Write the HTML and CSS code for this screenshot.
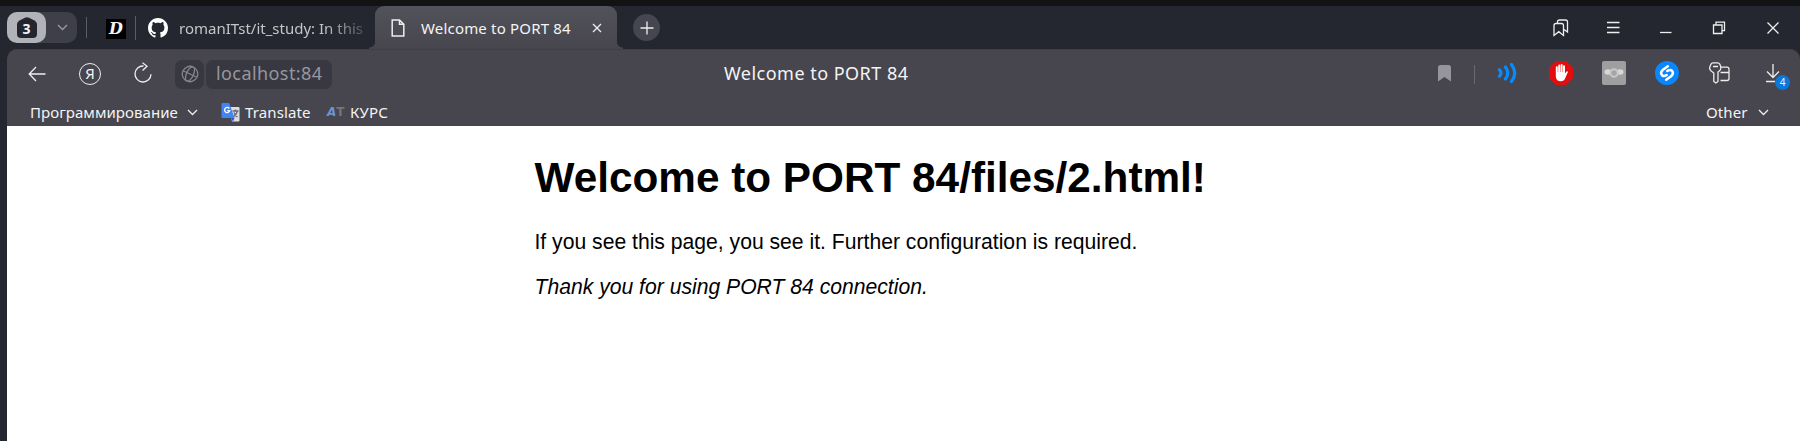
FILE: index.html
```html
<!DOCTYPE html>
<html lang="en">
<head>
<meta charset="utf-8">
<title>Welcome to PORT 84</title>
<link rel="stylesheet" href="styles.css">
</head>
<body>
<header class="tabs">
  <div class="group"><div class="count"><svg width="20" height="21" viewBox="0 0 20 21"><path d="M8 .7Q10-.3 12 .7L17.5 3.5Q20 5 20 7v10q0 4-4 4H4q-4 0-4-4V7Q0 5 2.5 3.5Z" fill="#24262f"/></svg><b>3</b></div><svg class="chev" width="11" height="7" viewBox="0 0 11 7"><path d="M1 1l4.500 4.500L10 1"/></svg></div>
  <i class="sep sep-a"></i>
  <span class="dicon">D</span>
  <i class="sep sep-b"></i>
  <svg class="github" width="20" height="20" viewBox="0 0 16 16"><path fill="#fff" d="M8 0C3.580 0 0 3.580 0 8c0 3.540 2.290 6.530 5.470 7.590.4.070.55-.17.55-.38 0-.19-.01-.82-.01-1.490-2.010.37-2.530-.49-2.690-.94-.09-.23-.48-.94-.82-1.130-.28-.15-.68-.52-.01-.53.63-.01 1.080.58 1.230.82.72 1.210 1.870.87 2.330.66.07-.52.28-.87.51-1.070-1.780-.2-3.640-.89-3.640-3.950 0-.87.31-1.590.82-2.150-.08-.2-.36-1.020.08-2.120 0 0 .67-.21 2.200.82.64-.18 1.320-.27 2-.27s1.360.09 2 .27c1.530-1.040 2.200-.82 2.200-.82.44 1.100.16 1.920.08 2.120.51.56.82 1.270.82 2.150 0 3.070-1.870 3.750-3.650 3.950.29.25.54.73.54 1.480 0 1.070-.01 1.930-.01 2.200 0 .21.15.46.55.38A8 8 0 0 0 16 8c0-4.420-3.580-8-8-8Z"/></svg>
  <span class="bgtitle">romanITst/it_study: In this</span>
  <div class="active">
    <svg class="doc" width="14" height="18" viewBox="0 0 14 18"><path d="M1.200 1h7.300L12.800 5.300v11.700H1.200ZM8.500 1v4.300h4.300" stroke-width="1.500"/></svg>
    <span class="acttitle">Welcome to PORT 84</span>
    <svg width="10" height="10" viewBox="0 0 10 10"><path d="M1 1l8 8M9 1L1 9"/></svg>
  </div>
  <div class="plus"><svg width="14" height="14" viewBox="0 0 14 14"><path d="M7 .5v13M.5 7h13"/></svg></div>
  <div class="window">
    <svg width="16" height="18" viewBox="0 0 16 18"><path d="M1 16.500V6.500q0-2 2-2h5.500q2 0 2 2v10L5.800 12.700ZM4.500 4.500V3q0-2 2-2h6q2 0 2 2V13L11 10.500"/></svg>
    <svg width="13" height="13" viewBox="0 0 13 13"><path d="M0 1.500h12.500M0 6.500h12.500M0 11.500h12.500"/></svg>
    <svg width="12" height="12" viewBox="0 0 12 12"><path d="M0 10.500h11.500"/></svg>
    <svg width="14" height="14" viewBox="0 0 14 14"><path d="M1.500 4h8.500v8.500H1.500ZM4 4V1.200h8.500v8.500H10"/></svg>
    <svg width="14" height="14" viewBox="0 0 14 14"><path d="M1.500 1.500l11 11M12.500 1.500l-11 11"/></svg>
  </div>
</header>
<div class="panel">
  <nav class="toolbar">
    <svg class="back" width="18" height="16" viewBox="0 0 18 16"><path d="M17.500 8H1.500M8 1L1.200 8L8 15"/></svg>
    <div class="ya">Я</div>
    <svg class="reload" width="20" height="22" viewBox="0 0 20 22"><path d="M10.500 4A8 8 0 1 0 18 12.200M9.500 .8L14 4.200L9.500 8.500"/></svg>
    <div class="globe"><svg width="18" height="18" viewBox="0 0 18 18"><g transform="rotate(25 9 9)"><circle cx="9" cy="9" r="7.700"/><ellipse cx="9" cy="9" rx="3.500" ry="7.700"/><path d="M1.300 9h15.400"/></g></svg></div>
    <div class="url"><span>localhost:84</span></div>
    <div class="pagetitle"><span>Welcome to PORT 84</span></div>
    <svg class="mark" width="13" height="17" viewBox="0 0 13 17"><path d="M0 16.500V2.500Q0 0 2.500 0h8Q13 0 13 2.500v14L6.500 12Z" fill="#96959b"/></svg>
    <i class="sep sep-c"></i>
    <div class="extensions">
      <svg width="24" height="24" viewBox="0 0 24 24"><g fill="none" stroke="#058cff" stroke-width="3.200" stroke-linecap="round"><path d="M3.500 8.700q2.800 3.300 0 6.600M9.500 6q4.500 6 0 12M15.500 3.500q6.500 8.500 0 17"/></g></svg>
      <svg width="24" height="24" viewBox="0 0 24 24"><path d="M7 0h10l7 7v10l-7 7H7L0 17V7Z" fill="#e40d0d"/><path d="M6.800 9V6.500q0-1.200 1-1.200t1 1.200V11h.4V4.700q0-1.200 1-1.200t1 1.200V11h.4V4.300q0-1.200 1-1.200t1 1.200V11h.4V5.500q0-1.200 1-1.200t1 1.200v7l1.200-1.800q1-1 1.800 0l-2.700 6.200q-1.200 3.300-4.500 3.300-5 0-5-5Z" fill="#fff"/></svg>
      <svg width="24" height="24" viewBox="0 0 24 24"><rect width="24" height="24" rx="2" fill="#9f9f9f"/><ellipse cx="6" cy="11" rx="3.500" ry="2.700" fill="#d8d8d8"/><ellipse cx="18" cy="11" rx="3.500" ry="2.700" fill="#d8d8d8"/><circle cx="12" cy="12" r="3.700" fill="#a5a5a5" stroke="#c8c8c8" stroke-width="2"/></svg>
      <svg width="24" height="24" viewBox="0 0 24 24"><circle cx="12" cy="12" r="12" fill="#0a87ff"/><g fill="none" stroke="#fff" stroke-width="2.500" stroke-linecap="round"><path d="M12.800 5.300L8 8.800Q4.800 11.500 7 14.200Q9 16 11.700 14M11.200 18.700L16 15.200Q19.200 12.500 17 9.800Q15 8 12.300 10"/></g></svg>
      <svg class="key" width="24" height="24" viewBox="0 0 24 24"><path d="M10 11Q13.500 9 12.700 5.500L11.700 3Q11 1.800 9.500 1.800H5Q3.500 1.800 2.800 3.500L1.800 6Q1 9 4.500 11L5.800 12v8.500l2 1.500 2.200-1.500ZM5 5.500h5M13 6.200h6q2 0 2 2v9.300q0 2-2 2h-6.500M12.500 11.500H21"/></svg>
      <div class="download"><svg width="16" height="20" viewBox="0 0 16 20"><path d="M8 0v13.500M2 7.500l6 6 6-6M1 17.500h9"/></svg><span>4</span></div>
    </div>
  </nav>
  <nav class="bookmarks">
    <span class="prog">Программирование</span>
    <svg class="c1" width="11" height="7" viewBox="0 0 11 7"><path d="M1 1l4.500 4.500L10 1"/></svg>
    <svg class="gt" width="19" height="19" viewBox="0 0 19 19"><path d="M8 4h9.500q1 0 1 1v12.500q0 1-1 1H11Z" fill="#ddd"/><path d="M11.500 8h6M14.500 6.500V8M16.500 8q-1 4-4.500 6M13 9.500q1 3 3.500 4.500" stroke="#667"/><path d="M1.500 0h6.700L13.500 15H1.500Q.5 15 .5 14V1Q.5 0 1.500 0Z" fill="#4285f4"/><path d="M13.500 15H10l2 3.500Z" fill="#2857c4"/><path d="M8.300 5.500A2.600 2.600 0 1 0 8.700 7.700H6.200" stroke="#fff"/></svg>
    <span class="translate">Translate</span>
    <span class="at"><b>A</b>T</span>
    <span class="course">КУРС</span>
    <span class="other">Other</span>
    <svg class="c2" width="11" height="7" viewBox="0 0 11 7"><path d="M1 1l4.500 4.500L10 1"/></svg>
  </nav>
  <main class="page">
    <article class="content">
      <h1>Welcome to PORT 84/files/2.html!</h1>
      <p>If you see this page, you see it. Further configuration is required.</p>
      <p><em>Thank you for using PORT 84 connection.</em></p>
    </article>
  </main>
</div>
</body>
</html>
```
FILE: styles.css
```css
* { box-sizing: border-box; }
body { margin: 0; height: 441px; display: flex; flex-direction: column; overflow: hidden; background: #242730; border-top: 6px solid #131313; font: 15px "Noto Sans", sans-serif; color: #f4f4f4; }
svg { display: block; flex: none; fill: none; stroke: #eee; stroke-width: 1.3; }
svg [fill]:not([stroke]):not(g) { stroke: none; }
span { white-space: nowrap; }
.sep { flex: none; width: 1px; background: #5b5c65; }
.tabs { height: 43px; flex: none; display: flex; align-items: center; padding-left: 7px; }
.group { width: 70px; height: 31px; border-radius: 10px; background: #3e3f49; display: flex; align-items: center; }
.count { width: 39px; height: 31px; border-radius: 10px; background: #b2b3b8; display: grid; place-items: center; }
.count > * { grid-area: 1 / 1; }
.count b { font-size: 14px; line-height: 20px; padding-top: 2px; }
.chev { margin-left: 11px; stroke: #999aa2; }
.sep-a { height: 21px; margin-left: 9px; }
.sep-b { height: 24px; margin-left: 9px; }
.dicon { width: 20px; height: 20px; margin: 3px 0 0 19px; background: #000; text-align: center; font: italic bold 16px/20px "DejaVu Serif", serif; }
.github { margin-left: 12px; stroke: none; }
.bgtitle { width: 185px; margin-left: 11px; overflow: hidden; color: #c5c5c9; mask-image: linear-gradient(90deg, #000 78%, rgba(0,0,0,.25)); }
.active { position: relative; width: 242px; height: 43px; margin-left: 11px; padding-left: 16px; display: flex; align-items: center; background: linear-gradient(#52525a, #47464f); border-radius: 9px 9px 0 0; }
.active::before, .active::after { content: ""; position: absolute; bottom: 0; width: 6px; height: 8px; }
.active::before { left: -6px; background: radial-gradient(circle at 0 0, transparent 6px, #47464f 7px); }
.active::after { right: -6px; background: radial-gradient(circle at 100% 0, transparent 6px, #47464f 7px); }
.acttitle { width: 171px; margin-left: 16px; letter-spacing: .18px; }
.plus { width: 27px; height: 27px; margin-left: 16px; border-radius: 50%; background: #454650; display: grid; place-items: center; }
.window { margin-left: auto; padding-right: 20px; display: flex; align-items: center; gap: 40px; }
.window svg:first-child { margin-right: -2px; }
.panel { position: relative; flex: 1; margin-left: 7px; background: #47464f; border-radius: 10px 10px 0 0; box-shadow: inset 0 1px #403f48; display: flex; flex-direction: column; }
.toolbar { height: 50px; flex: none; display: flex; align-items: center; padding-left: 21px; }
.ya { width: 22px; height: 22px; margin-left: 33px; border: 1.3px solid #eee; border-radius: 50%; font: 15px/19px "Noto Sans", sans-serif; text-align: center; }
.reload { margin: -2px 0 0 32px; }
.globe { width: 29px; height: 29px; margin-left: 22px; background: #373841; border-radius: 7px; display: grid; place-items: center; }
.globe svg { stroke: #85858d; }
.url { width: 126px; height: 29px; margin-left: 2px; padding-left: 10px; background: #373841; border-radius: 7px; font-size: 18px; line-height: 27px; letter-spacing: .42px; color: #97969e; }
.pagetitle { width: 186px; margin-left: 392px; font-size: 18px; line-height: 24px; padding-bottom: 2px; letter-spacing: .48px; }
.mark { margin-left: 528px; margin-top: -2px; }
.sep-c { height: 19px; margin-left: 23px; background: #696871; }
.extensions { display: flex; align-items: center; gap: 29px; margin-left: 21px; margin-top: -2px; }
.download { position: relative; width: 26px; height: 24px; padding: 3px 0 0 4px; }
.download span { position: absolute; left: 14px; top: 14px; width: 15px; height: 15px; border-radius: 50%; background: #0879dc; font-size: 10px; line-height: 15px; text-align: center; }
.bookmarks { height: 27px; flex: none; padding: 0 31px 1px 23px; display: flex; align-items: center; }
.prog { width: 148px; letter-spacing: .05px; }
.c1 { margin-left: 9px; }
.gt { margin-left: 23px; }
.translate { width: 66px; margin-left: 5px; letter-spacing: .12px; }
.at { margin-left: 16px; width: 19px; color: #77757a; font: bold 12px/12px "DejaVu Sans", sans-serif; }
.at b { color: #6d93cf; font-style: italic; }
.course { margin-left: 4px; letter-spacing: .15px; }
.other { margin-left: auto; width: 43px; letter-spacing: .1px; }
.c2 { margin-left: 9px; }
.page { flex: 1; background: #fff; color: #000; font: 21.15px "Liberation Sans", Arial, sans-serif; overflow: hidden; }
.content { width: 738px; margin: 0 auto; }
h1 { font-size: 2em; margin: .67em 0 28px; }
p { margin: 0 0 21px; }
```
